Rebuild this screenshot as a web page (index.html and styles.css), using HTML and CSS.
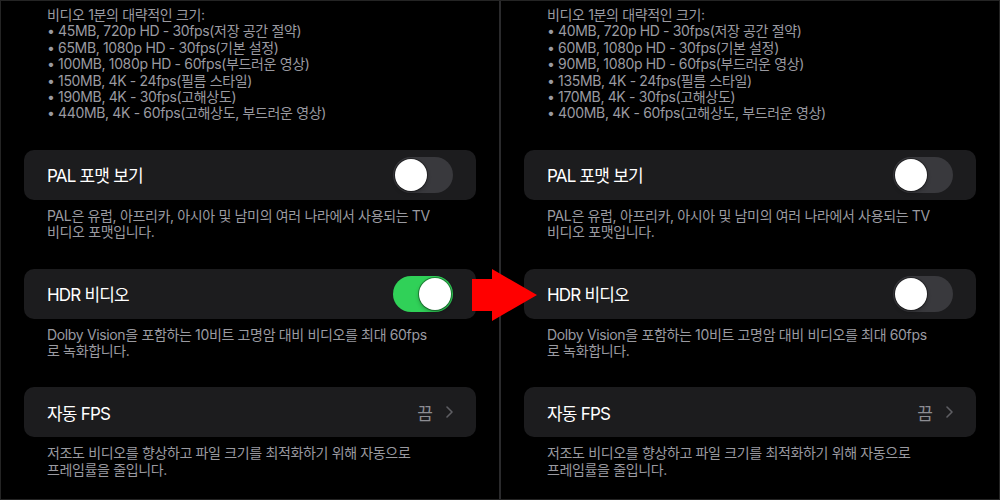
FILE: index.html
```html
<!DOCTYPE html>
<html lang="ko">
<head>
  <meta charset="UTF-8" />
  <meta name="viewport" content="width=device-width, initial-scale=1.0" />
  <title>카메라 - 비디오 녹화</title>
  <link rel="stylesheet" href="styles.css">
</head>
<body>
  <div class="frame">

    <!-- Before: HDR on -->
    <section class="panel">
      <p class="note note-top">
        비디오 1분의 대략적인 크기:<br>
        • 45MB, 720p HD - 30fps(저장 공간 절약)<br>
        • 65MB, 1080p HD - 30fps(기본 설정)<br>
        • 100MB, 1080p HD - 60fps(부드러운 영상)<br>
        • 150MB, 4K - 24fps(필름 스타일)<br>
        • 190MB, 4K - 30fps(고해상도)<br>
        • 440MB, 4K - 60fps(고해상도, 부드러운 영상)
      </p>

      <div class="row">
        <span class="row-label">PAL 포맷 보기</span>
        <span class="switch"><span class="knob"></span></span>
      </div>
      <p class="note">PAL은 유럽, 아프리카, 아시아 및 남미의 여러 나라에서 사용되는 TV<br>비디오 포맷입니다.</p>

      <div class="row">
        <span class="row-label">HDR 비디오</span>
        <span class="switch on"><span class="knob"></span></span>
      </div>
      <p class="note">Dolby Vision을 포함하는 10비트 고명암 대비 비디오를 최대 60fps<br>로 녹화합니다.</p>

      <div class="row">
        <span class="row-label">자동 FPS</span>
        <span class="row-value">끔
          <svg class="chevron" width="7" height="12" viewBox="0 0 7 12"><path d="M1 1l5 5-5 5" fill="none" stroke="#5e5e63" stroke-width="1.6" stroke-linecap="round" stroke-linejoin="round"/></svg>
        </span>
      </div>
      <p class="note">저조도 비디오를 향상하고 파일 크기를 최적화하기 위해 자동으로<br>프레임률을 줄입니다.</p>
    </section>

    <div class="divider"></div>

    <!-- After: HDR off -->
    <section class="panel">
      <p class="note note-top">
        비디오 1분의 대략적인 크기:<br>
        • 40MB, 720p HD - 30fps(저장 공간 절약)<br>
        • 60MB, 1080p HD - 30fps(기본 설정)<br>
        • 90MB, 1080p HD - 60fps(부드러운 영상)<br>
        • 135MB, 4K - 24fps(필름 스타일)<br>
        • 170MB, 4K - 30fps(고해상도)<br>
        • 400MB, 4K - 60fps(고해상도, 부드러운 영상)
      </p>

      <div class="row">
        <span class="row-label">PAL 포맷 보기</span>
        <span class="switch"><span class="knob"></span></span>
      </div>
      <p class="note">PAL은 유럽, 아프리카, 아시아 및 남미의 여러 나라에서 사용되는 TV<br>비디오 포맷입니다.</p>

      <div class="row">
        <span class="row-label">HDR 비디오</span>
        <span class="switch"><span class="knob"></span></span>
      </div>
      <p class="note">Dolby Vision을 포함하는 10비트 고명암 대비 비디오를 최대 60fps<br>로 녹화합니다.</p>

      <div class="row">
        <span class="row-label">자동 FPS</span>
        <span class="row-value">끔
          <svg class="chevron" width="7" height="12" viewBox="0 0 7 12"><path d="M1 1l5 5-5 5" fill="none" stroke="#5e5e63" stroke-width="1.6" stroke-linecap="round" stroke-linejoin="round"/></svg>
        </span>
      </div>
      <p class="note">저조도 비디오를 향상하고 파일 크기를 최적화하기 위해 자동으로<br>프레임률을 줄입니다.</p>
    </section>

    <!-- red arrow laid over the split -->
    <svg class="arrow" width="66" height="54" viewBox="0 0 66 54">
      <polygon points="0,10 20,10 20,0 65,26 20,52 20,42 0,42" fill="#ff0000"/>
    </svg>
  </div>
</body>
</html>
```

FILE: styles.css
```css
* {
  box-sizing: border-box;
}
body {
  margin: 0;
  background: #000;
  font-family: Inter, "Noto Sans CJK KR", sans-serif;
}
.frame {
  position: relative;
  width: 1000px;
  height: 500px;
  display: flex;
  background: #000;
  border: 1px solid #242424;
  overflow: hidden;
}
.panel {
  flex: 1;
  padding: 6px 23px 0;
}
.divider {
  width: 2px;
  background: #2a2a2c;
}
.note {
  margin: 8px 0 28px;
  padding-left: 23px;
  font-size: 14px;
  line-height: 16.4px;
  letter-spacing: -0.35px;
  color: #9a9aa0;
}
.note-top {
  margin: 0 0 28px;
}
.row {
  height: 50px;
  display: flex;
  align-items: center;
  justify-content: space-between;
  padding: 0 23px;
  background: #1c1c1e;
  border-radius: 10px;
}
.row-label {
  font-size: 17px;
  letter-spacing: -0.8px;
  color: #fff;
}
.row-value {
  display: flex;
  align-items: center;
  gap: 13px;
  font-size: 17px;
  color: #8d8d93;
}
.switch {
  position: relative;
  width: 60px;
  height: 36px;
  border-radius: 18px;
  background: #39393d;
}
.switch .knob {
  position: absolute;
  top: 2px;
  left: 2px;
  width: 32px;
  height: 32px;
  border-radius: 50%;
  background: #fff;
  box-shadow: 0 0 0 1px rgba(0, 0, 0, 0.35), 0 2px 4px rgba(0, 0, 0, 0.3);
}
.switch.on {
  background: #30d158;
}
.switch.on .knob {
  left: 26px;
}
.arrow {
  position: absolute;
  left: 471px;
  top: 268px;
}
```
